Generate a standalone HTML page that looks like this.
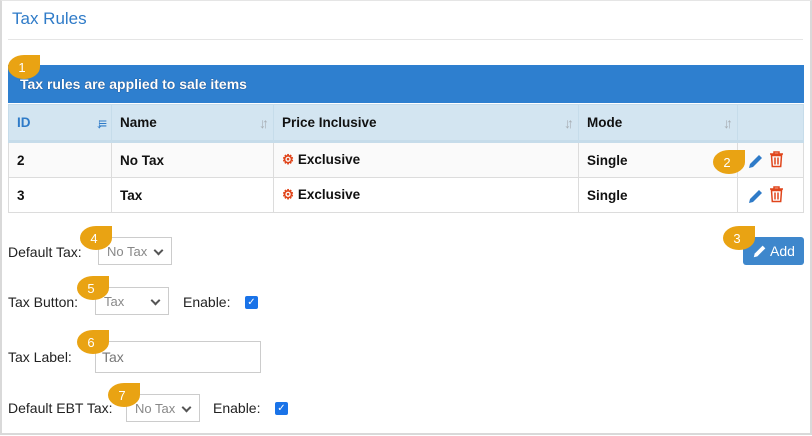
<!DOCTYPE html>
<html><head><style>
body{margin:0;width:812px;height:436px;background:#fff;position:relative;overflow:hidden;font-family:"Liberation Sans",sans-serif}
.frame{position:absolute;left:0;top:0;width:808px;height:432px;border:2px solid #d9d9d9;border-top:1px solid #e5e5e5}
.a{position:absolute}
.title{left:12px;top:9px;font-size:17px;color:#2f7bc8}
.hr{left:8px;top:39px;width:795px;height:1px;background:#e5e5e5}
.bar{left:8px;top:65px;width:796px;height:38px;background:#2e7fcf;color:#fff;font-weight:bold;font-size:14px;line-height:38px;text-indent:12px;text-shadow:0 0 1px #124}
table{position:absolute;left:8px;top:104px;width:796px;border-collapse:collapse;font-size:13.5px;font-weight:bold;color:#111}
td,th{border:1px solid #dcdcdc;padding:0 8px;text-align:left;position:relative}
th{background:#d3e5f1;height:35px;border-bottom:3px solid #b9d4e6;border-color:#c6dcea}
th .s{position:absolute;right:8px;top:10px;color:#a8aeb4;font-size:14px;font-weight:bold;letter-spacing:-4px}
td{height:34px}
.lbl{font-size:14px;color:#222}
.sel{border:1px solid #ccc;font-size:13px;color:#888;height:28px;line-height:28px;padding-left:8px;box-sizing:border-box}
.sel:after{content:"";position:absolute;right:9px;top:9px;width:5px;height:5px;border-right:2px solid #555;border-bottom:2px solid #555;transform:rotate(45deg)}
.inp{border:1px solid #ccc;font-size:14px;color:#777;padding-left:6px;box-sizing:border-box}
.cb{width:13px;height:13px;background:#1a73e8;border-radius:2px;color:#fff;font-size:10px;line-height:13px;text-align:center}
.bd{width:32px;height:24px;background:#e9a313;border-radius:50% 0 50% 50%;color:#fff;font-size:13px;line-height:26px;text-align:center;text-indent:-4px}
.btn{left:743px;top:237px;width:61px;height:28px;background:#3e87cc;border-radius:3px;color:#fff;font-size:14px;line-height:28px}
</style></head><body>
<div class="frame"></div>
<div class="a title">Tax Rules</div>
<div class="a hr"></div>
<div class="a bar">Tax rules are applied to sale items</div>
<table>
<tr><th style="width:86px;color:#2f7bc8">ID<span class="s" style="color:#2f7bc8">↓≡</span></th><th style="width:145px">Name<span class="s">↓↑</span></th><th style="width:288px">Price Inclusive<span class="s">↓↑</span></th><th style="width:142px">Mode<span class="s">↓↑</span></th><th></th></tr>
<tr style="background:#fafafa"><td>2</td><td>No Tax</td><td><span style="color:#e0451b">⚙</span> Exclusive</td><td>Single</td><td></td></tr>
<tr><td>3</td><td>Tax</td><td><span style="color:#e0451b">⚙</span> Exclusive</td><td>Single</td><td></td></tr>
</table>
<svg class="a" style="left:747px;top:152px" width="18" height="18" viewBox="0 0 18 18"><path d="M2 16l1-4 9-9 3 3-9 9z" fill="#2f7bc8"/></svg>
<svg class="a" style="left:769px;top:151px" width="15" height="17" viewBox="0 0 15 17"><path d="M1 3h13M5 3V1h5v2M2.5 4.5h10l-.8 11h-8.4z M6 6.5v7M9 6.5v7" fill="none" stroke="#e0451b" stroke-width="1.5"/></svg>
<svg class="a" style="left:747px;top:187px" width="18" height="18" viewBox="0 0 18 18"><path d="M2 16l1-4 9-9 3 3-9 9z" fill="#2f7bc8"/></svg>
<svg class="a" style="left:769px;top:186px" width="15" height="17" viewBox="0 0 15 17"><path d="M1 3h13M5 3V1h5v2M2.5 4.5h10l-.8 11h-8.4z M6 6.5v7M9 6.5v7" fill="none" stroke="#e0451b" stroke-width="1.5"/></svg>
<div class="a btn"><svg style="position:absolute;left:9px;top:6px" width="16" height="16" viewBox="0 0 18 18"><path d="M2 16l1-4 9-9 3 3-9 9z" fill="#fff"/></svg><span style="position:absolute;left:27px">Add</span></div>
<div class="a lbl" style="left:8px;top:244px">Default Tax:</div>
<div class="a sel" style="left:98px;top:237px;width:74px">No Tax</div>
<div class="a lbl" style="left:8px;top:294px">Tax Button:</div>
<div class="a sel" style="left:95px;top:287px;width:74px">Tax</div>
<div class="a lbl" style="left:183px;top:294px">Enable:</div>
<div class="a cb" style="left:245px;top:296px">✓</div>
<div class="a lbl" style="left:8px;top:349px">Tax Label:</div>
<div class="a inp" style="left:95px;top:341px;width:166px;height:32px;line-height:30px">Tax</div>
<div class="a lbl" style="left:8px;top:400px">Default EBT Tax:</div>
<div class="a sel" style="left:126px;top:394px;width:74px">No Tax</div>
<div class="a lbl" style="left:213px;top:400px">Enable:</div>
<div class="a cb" style="left:275px;top:402px">✓</div>
<div class="a bd" style="left:8px;top:55px">1</div>
<div class="a bd" style="left:713px;top:150px">2</div>
<div class="a bd" style="left:723px;top:226px">3</div>
<div class="a bd" style="left:80px;top:226px">4</div>
<div class="a bd" style="left:77px;top:276px">5</div>
<div class="a bd" style="left:77px;top:330px">6</div>
<div class="a bd" style="left:108px;top:383px">7</div>
</body></html>
